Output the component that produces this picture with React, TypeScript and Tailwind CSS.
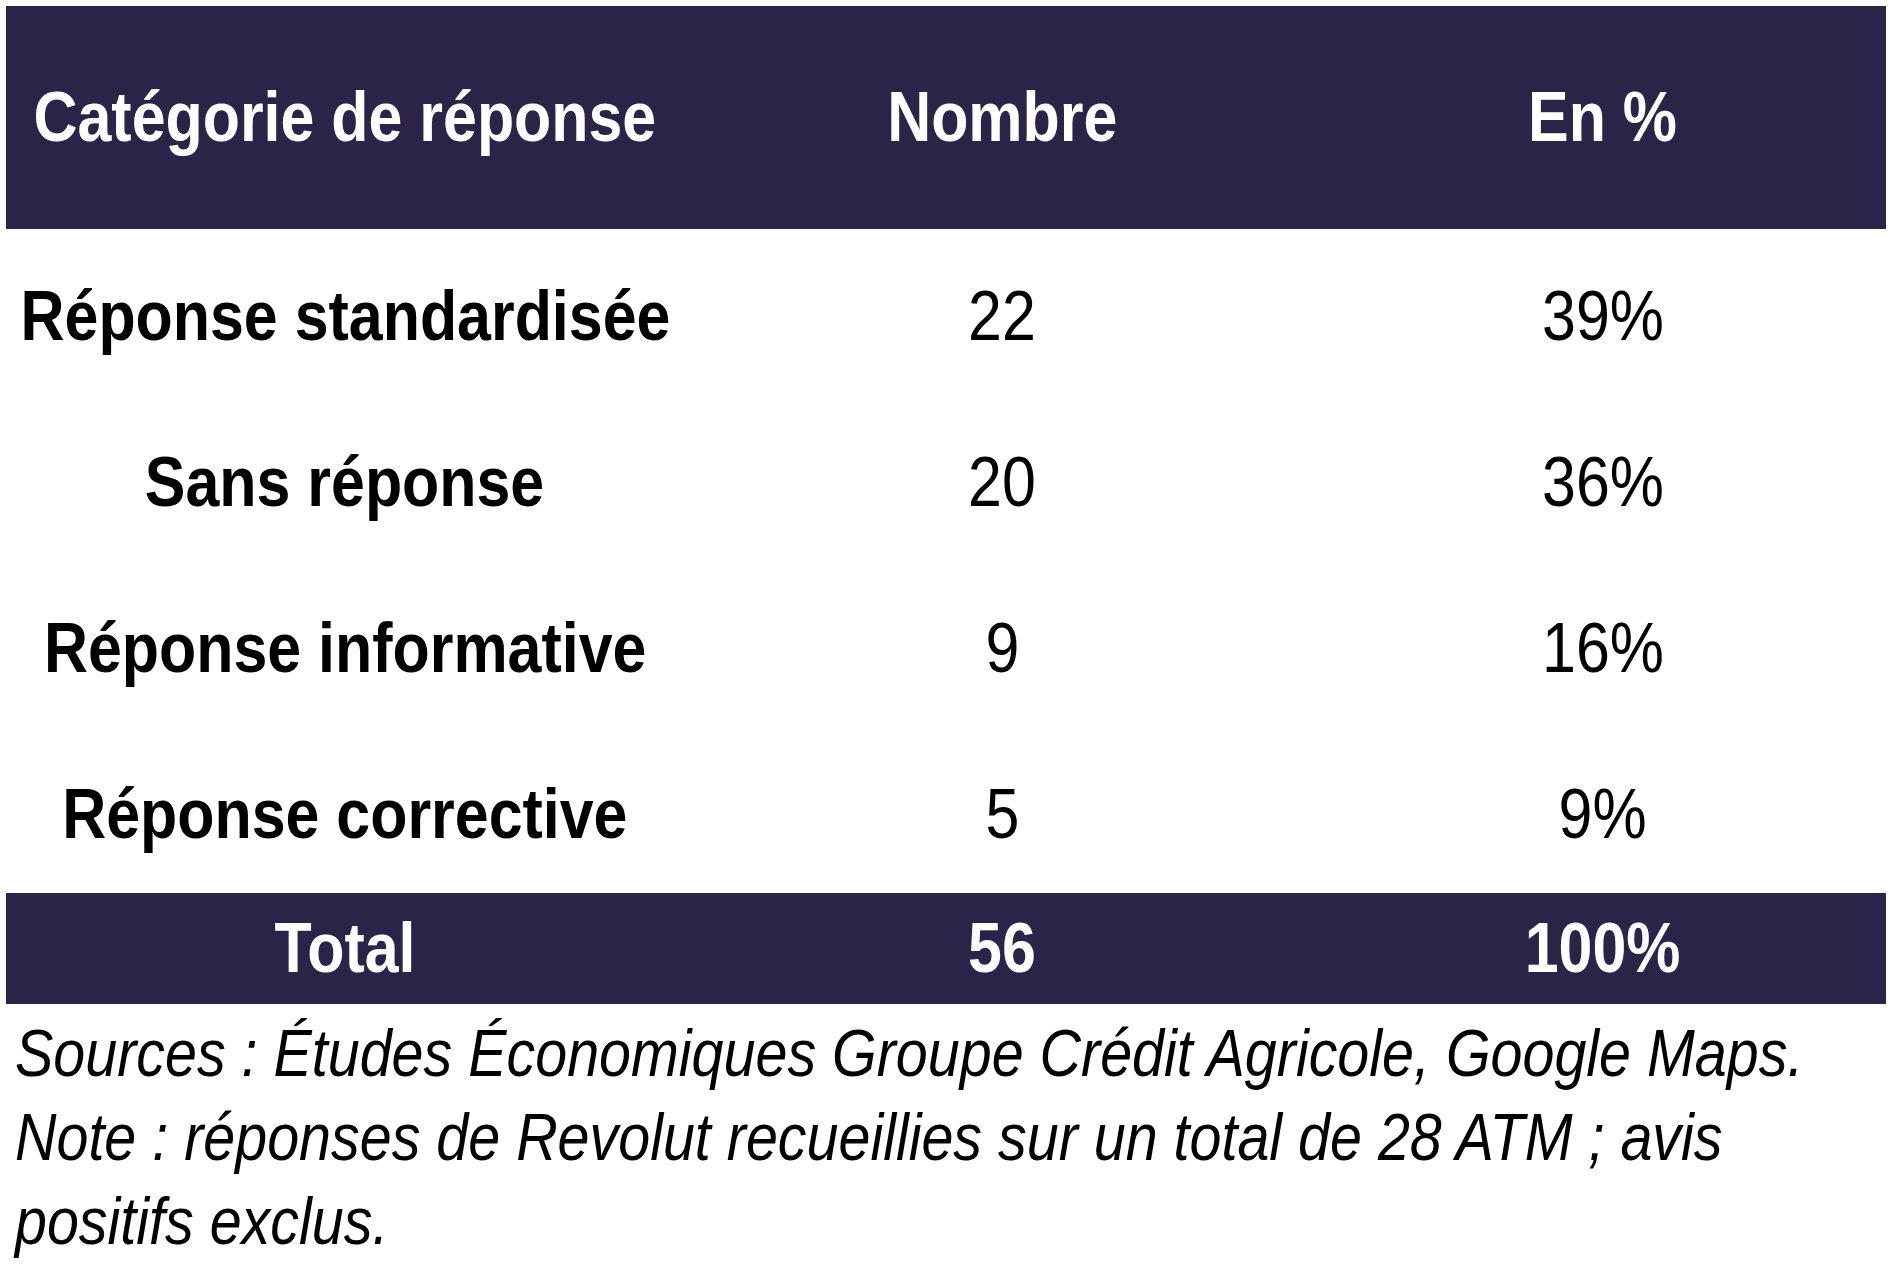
import React from "react";

const rows = [
  { label: "Réponse standardisée", n: "22", p: "39%" },
  { label: "Sans réponse", n: "20", p: "36%" },
  { label: "Réponse informative", n: "9", p: "16%" },
  { label: "Réponse corrective", n: "5", p: "9%" },
];

const font = { fontFamily: '"Liberation Sans", Arial, sans-serif' };

function Cell({ children, bold }: { children: React.ReactNode; bold?: boolean }) {
  return (
    <div className="flex justify-center">
      <span className={`inline-block whitespace-nowrap scale-x-[0.87] ${bold ? "font-bold" : "font-normal"}`}>
        {children}
      </span>
    </div>
  );
}

export default function App() {
  return (
    <div className="w-[1890px] h-[1280px] bg-white overflow-hidden" style={font}>
      <div className="pt-[6px] pl-[6px] w-[1886px]">
        <div className="grid grid-cols-[678px_636px_566px] h-[223px] bg-[#2c2348] text-white text-[70px] items-center">
          <Cell bold>Catégorie de réponse</Cell>
          <Cell bold>Nombre</Cell>
          <Cell bold>En %</Cell>
        </div>
        {rows.map((r) => (
          <div
            key={r.label}
            className="grid grid-cols-[678px_636px_566px] h-[166px] pt-[8px] text-black text-[70px] items-center"
          >
            <Cell bold>{r.label}</Cell>
            <Cell>{r.n}</Cell>
            <Cell>{r.p}</Cell>
          </div>
        ))}
        <div className="grid grid-cols-[678px_636px_566px] h-[111px] bg-[#2c2348] text-white text-[70px] items-center">
          <Cell bold>Total</Cell>
          <Cell bold>56</Cell>
          <Cell bold>100%</Cell>
        </div>
        <div className="pl-[9px] pt-[7px]">
          <div className="inline-block origin-left scale-x-[0.87] italic text-black text-[66px] leading-[84px] whitespace-nowrap">
            Sources : Études Économiques Groupe Crédit Agricole, Google Maps.
            <br />
            Note : réponses de Revolut recueillies sur un total de 28 ATM ; avis
            <br />
            positifs exclus.
          </div>
        </div>
      </div>
    </div>
  );
}
